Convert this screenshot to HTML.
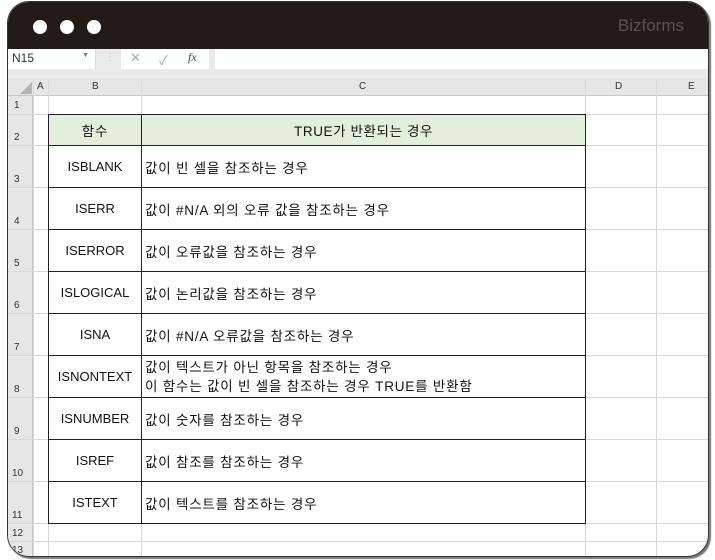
<!DOCTYPE html>
<html><head><meta charset="utf-8"><style>
*{margin:0;padding:0;box-sizing:border-box}
body{width:715px;height:560px;background:#fff;position:relative;overflow:hidden;font-family:"Liberation Sans","Noto Sans CJK KR",sans-serif}
.frame{position:absolute;left:7px;top:1px;width:702px;height:556px;border-radius:22px;overflow:hidden;border:1px solid #3a3533;background:#fff;box-shadow:2px 2px 1px #777}
.bar{position:absolute;left:0;top:0;right:0;height:47px;background:#231b18}
.dot{position:absolute;top:18px;width:14px;height:14px;border-radius:50%;background:#fff}
.logo{position:absolute;right:24px;top:14px;color:#5a5250;font-size:17px}
.abs{position:absolute}
.hl{position:absolute;background:#d9d9d9}
td{border:1px solid #222}
td.c{padding-left:3px;font-size:13.5px;letter-spacing:0.8px}
td.b{text-align:center}
</style></head><body>
<div class="frame">
<div class="bar"><div class="dot" style="left:25px"></div><div class="dot" style="left:52px"></div><div class="dot" style="left:79px"></div><div class="logo">Bizforms</div></div>
<div class="abs" style="left:0;top:47px;width:701px;height:30px;background:#eaeaea"></div>
<div class="abs" style="left:0;top:47px;width:88px;height:20px;background:#fff;border-right:1px solid #ddd;font-size:12px;color:#333;padding:2px 0 0 4px">N15<span style="position:absolute;left:74px;top:3px;font-size:7px;color:#777">▼</span></div>
<div class="abs" style="left:97px;top:50px;color:#bbb;font-size:10px">⋮</div>
<div class="abs" style="left:113px;top:47px;width:88px;height:20px;background:#fff;font-size:13px;color:#aaa"><span style="position:absolute;left:9px;top:1px">✕</span><span style="position:absolute;left:38px;top:1px">✓</span><span style="position:absolute;left:67px;top:1px;font-family:'Liberation Serif',serif;font-style:italic;color:#444;font-size:12px">fx</span></div>
<div class="abs" style="left:207px;top:47px;width:494px;height:20px;background:#fff"></div>
<div class="abs" style="left:0;top:76px;width:701px;height:18px;background:#e6e6e6;border-bottom:1px solid #c8c8c8"></div>
<div class="abs" style="left:0;top:94px;width:25px;height:461px;background:#e6e6e6;border-right:1px solid #c8c8c8"></div>
<svg class="abs" style="left:12px;top:80px" width="12" height="12"><polygon points="12,0 12,12 0,12" fill="#b5b5b5"/></svg>
<div class="abs" style="left:29px;top:79px;font-size:10px;color:#333">A</div>
<div class="abs" style="left:84px;top:79px;font-size:10px;color:#333">B</div>
<div class="abs" style="left:351px;top:79px;font-size:10px;color:#333">C</div>
<div class="abs" style="left:607px;top:79px;font-size:10px;color:#333">D</div>
<div class="abs" style="left:680px;top:79px;font-size:10px;color:#333">E</div>
<div class="hl" style="left:25px;top:78px;width:1px;height:477px"></div>
<div class="hl" style="left:40px;top:78px;width:1px;height:477px"></div>
<div class="hl" style="left:133px;top:78px;width:1px;height:477px"></div>
<div class="hl" style="left:577px;top:78px;width:1px;height:477px"></div>
<div class="hl" style="left:648px;top:78px;width:1px;height:477px"></div>
<div class="hl" style="left:0;top:112px;width:701px;height:1px"></div>
<div class="hl" style="left:0;top:143px;width:701px;height:1px"></div>
<div class="hl" style="left:0;top:185px;width:701px;height:1px"></div>
<div class="hl" style="left:0;top:227px;width:701px;height:1px"></div>
<div class="hl" style="left:0;top:269px;width:701px;height:1px"></div>
<div class="hl" style="left:0;top:311px;width:701px;height:1px"></div>
<div class="hl" style="left:0;top:353px;width:701px;height:1px"></div>
<div class="hl" style="left:0;top:395px;width:701px;height:1px"></div>
<div class="hl" style="left:0;top:437px;width:701px;height:1px"></div>
<div class="hl" style="left:0;top:479px;width:701px;height:1px"></div>
<div class="hl" style="left:0;top:521px;width:701px;height:1px"></div>
<div class="hl" style="left:0;top:539px;width:701px;height:1px"></div>
<div class="abs" style="left:6px;top:98px;font-size:10px;color:#333">1</div>
<div class="abs" style="left:6px;top:130px;font-size:10px;color:#333">2</div>
<div class="abs" style="left:6px;top:172px;font-size:10px;color:#333">3</div>
<div class="abs" style="left:6px;top:214px;font-size:10px;color:#333">4</div>
<div class="abs" style="left:6px;top:256px;font-size:10px;color:#333">5</div>
<div class="abs" style="left:6px;top:298px;font-size:10px;color:#333">6</div>
<div class="abs" style="left:6px;top:340px;font-size:10px;color:#333">7</div>
<div class="abs" style="left:6px;top:382px;font-size:10px;color:#333">8</div>
<div class="abs" style="left:6px;top:424px;font-size:10px;color:#333">9</div>
<div class="abs" style="left:4px;top:466px;font-size:10px;color:#333">10</div>
<div class="abs" style="left:4px;top:508px;font-size:10px;color:#333">11</div>
<div class="abs" style="left:4px;top:526px;font-size:10px;color:#333">12</div>
<div class="abs" style="left:4px;top:543px;font-size:10px;color:#333">13</div>
<table class="abs" style="left:40px;top:112px;border-collapse:collapse;font-size:13px;color:#111">
<col style="width:93px"><col style="width:444px">
<tr style="height:31px;background:#e2efda"><td class="b" style="font-size:13.5px;letter-spacing:0.8px">함수</td><td style="text-align:center;font-size:13.5px;letter-spacing:0.6px">TRUE가 반환되는 경우</td></tr>
<tr style="height:42px"><td class="b">ISBLANK</td><td class="c">값이 빈 셀을 참조하는 경우</td></tr>
<tr style="height:42px"><td class="b">ISERR</td><td class="c">값이 #N/A 외의 오류 값을 참조하는 경우</td></tr>
<tr style="height:42px"><td class="b">ISERROR</td><td class="c">값이 오류값을 참조하는 경우</td></tr>
<tr style="height:42px"><td class="b">ISLOGICAL</td><td class="c">값이 논리값을 참조하는 경우</td></tr>
<tr style="height:42px"><td class="b">ISNA</td><td class="c">값이 #N/A 오류값을 참조하는 경우</td></tr>
<tr style="height:42px"><td class="b">ISNONTEXT</td><td class="c" style="line-height:19px">값이 텍스트가 아닌 항목을 참조하는 경우<br>이 함수는 값이 빈 셀을 참조하는 경우 TRUE를 반환함</td></tr>
<tr style="height:42px"><td class="b">ISNUMBER</td><td class="c">값이 숫자를 참조하는 경우</td></tr>
<tr style="height:42px"><td class="b">ISREF</td><td class="c">값이 참조를 참조하는 경우</td></tr>
<tr style="height:42px"><td class="b">ISTEXT</td><td class="c">값이 텍스트를 참조하는 경우</td></tr>
</table>
</div>
</body></html>
